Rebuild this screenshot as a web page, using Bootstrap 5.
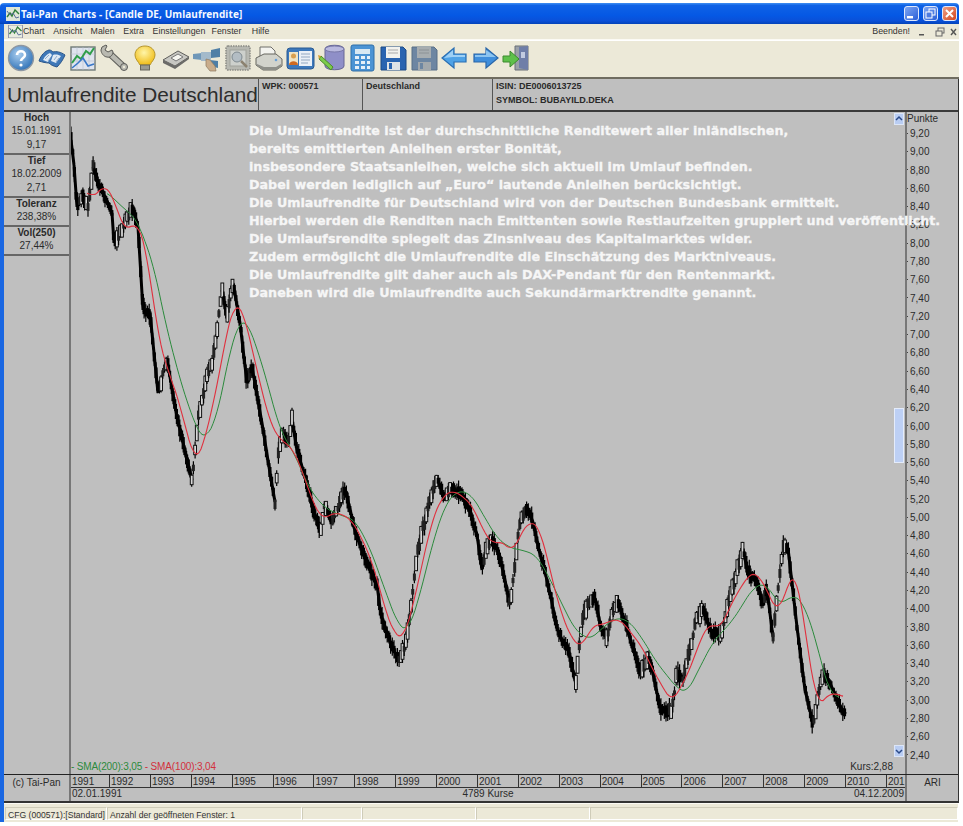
<!DOCTYPE html>
<html lang="de">
<head>
<meta charset="utf-8">
<title>Tai-Pan Charts</title>
<link href="https://cdn.jsdelivr.net/npm/bootstrap@5.3.0/dist/css/bootstrap.min.css" rel="stylesheet">
<style>
html,body{height:826px;overflow:hidden;background:#fff;}
body{font-family:"Liberation Sans",Arial,sans-serif;font-size:10px;color:#2b2b2b;line-height:1;}
.appwin{width:959px;height:822px;padding-top:3px;}
.titlebar{height:21px;background:linear-gradient(#3f8ff2 0,#0f62e6 12%,#0558e4 60%,#0a50d8 85%,#0343b8 100%);padding:0 2px 0 6px;border-radius:4px 4px 0 0;}
.titletext{font-family:"Noto Sans",sans-serif;font-weight:700;font-size:10px;color:#f4f8ff;margin-left:1px;white-space:pre;letter-spacing:.1px;}
.capbtn{width:15px;height:15px;border:1px solid #dfe8fb;border-radius:3px;background:linear-gradient(135deg,#7ea6f2,#2a5fd8);}
.capclose{background:linear-gradient(135deg,#f0a085,#d2451e);}
.shell{border-left:4px solid #1a67e2;flex:1;min-height:0;}
.menubar{height:16px;background:#ece9d8;padding:0 1px 0 4px;font-size:8.8px;color:#333;border-bottom:1px solid #fbfaf4;}
.m2{margin-left:8.8px;}.m1{margin-left:0;}.m3{margin-left:8.4px;}.m4{margin-left:8.8px;}.m5{margin-left:8.7px;}.m6{margin-left:6.2px;}.m7{margin-left:10.4px;}
.toolbar{height:39px;background:#ece9d8;padding:2px 0 0 2px;gap:1px;border-bottom:2px solid #6f6c60;border-top:1px solid #fff;}
.toolbar svg{width:30px;height:30px;display:block;}
.panel{background:#bfbfbf;flex:1;min-height:0;border-right:1px solid #333;}
.headrow{height:33px;border-bottom:2px solid #3a3a3a;}
.bigtitle{width:255px;font-size:20.8px;padding:6px 0 0 3px;color:#2d2d2d;white-space:nowrap;border-right:1px solid #555;}
.hcell{font-weight:700;font-size:9px;padding:3px 0 0 3px;color:#2a2a2a;border-right:1px solid #555;}
.hw1{width:104px;}.hw2{width:130px;}
.hcell div+div{margin-top:5px;}
.mainrow{flex:1;min-height:0;}
.sidecol{width:67px;border-right:2px solid #777;text-align:center;}
.statbox{border-bottom:2px solid #666;}
.statbox b{display:block;height:12px;line-height:11px;color:#2a2a2a;font-size:10px;}
.statbox span{display:block;height:14px;line-height:14px;}
.s3{height:43px;}.s2{height:29px;}
.chartzone{flex:1;min-width:0;}
.chartsvg{position:absolute;left:0;top:0;width:834px;height:662px;display:block;filter:blur(.35px);}
.infotext{position:absolute;left:178px;top:10px;font-family:"DejaVu Sans",sans-serif;font-weight:700;font-size:12.7px;line-height:18.05px;color:#f6f6f6;white-space:nowrap;z-index:3;-webkit-text-stroke:.3px #f6f6f6;}
.legendrow{position:relative;margin-top:auto;height:15px;line-height:15px;padding:0 12px 0 0;}
.smatext{letter-spacing:-.15px;}
.grn{color:#2c8a3c;}.rd{color:#d2303c;}
.axiscol{width:53px;border-left:2px solid #777;padding-top:2px;position:relative;}
.axistitle{padding-left:0;height:11px;}
.axisvals{flex:1;padding:4px 0 13px 0;}
.axisvals span{display:block;height:10px;line-height:10px;}
.axisvals span::before{content:"";display:inline-block;width:1px;height:1px;background:#444;margin:0 2px 2px 0;vertical-align:middle;}
.sbtn{position:absolute;right:1px;width:10px;height:12px;border:1px solid #dce6f8;background:#b9cdf3;z-index:4;}
.sthumb{position:absolute;right:1px;top:296px;width:10px;height:55px;background:#bdd0f5;border:1px solid #e4ecfb;z-index:4;}
.sup{top:1px;}.sdown{top:633px;}
.bottomrow{height:29px;border-top:1px solid #222;border-bottom:2px solid #333;}
.cpcol{width:67px;padding-top:3px;text-align:center;border-right:2px solid #777;}
.axcenter{flex:1;min-width:0;}
.yeargrid{display:grid;grid-template-columns:39px repeat(19,40.9px) 1fr;height:14px;border-bottom:1px solid #333;}
.yeargrid div{border-right:1px solid #333;padding:2px 0 0 1px;white-space:nowrap;}
.yeargrid div:last-child{border-right:0;}
.daterow{height:13px;padding:1px 1px 0 1px;}
.aricol{width:53px;border-left:2px solid #777;text-align:center;padding-top:3px;}
.statusbar{height:19px;background:#ece9d8;padding:3px 0 2px 1px;font-size:8.6px;border-top:1px solid #fbfaf4;margin-right:1px;color:#333;}
.spane{height:100%;border:1px solid #d3d0bf;border-color:#cfccb9 #fff #fff #cfccb9;padding:3px 2px 0 2px;white-space:nowrap;}
.p1{width:102px;}.p2{width:195px;}.p3{width:60px;}.p4{width:114px;}.p5{width:114px;}.p6{flex:1;}
</style>
</head>
<body>
<div class="appwin d-flex flex-column">
  <div class="titlebar d-flex align-items-center">
    <svg width="14" height="14" viewBox="0 0 14 14"><rect width="14" height="14" fill="#dfe6d8"/><path d="M1 10l3-4 2 3 3-6 4 4" fill="none" stroke="#2f7d3a" stroke-width="1.4"/><path d="M1 4l3 4 3-2 3 5 3-1" fill="none" stroke="#5a6f9a"/></svg>
    <span class="titletext">Tai-Pan  Charts - [Candle DE, Umlaufrendite]</span>
    <div class="ms-auto d-flex gap-1">
      <div class="capbtn d-flex align-items-end justify-content-start"><svg width="13" height="13" viewBox="0 0 13 13"><rect x="2" y="9" width="6" height="2.4" fill="#fff"/></svg></div>
      <div class="capbtn"><svg width="13" height="13" viewBox="0 0 13 13"><rect x="5" y="2" width="6" height="6" fill="none" stroke="#fff"/><rect x="2" y="5" width="6" height="6" fill="#4d7be0" stroke="#fff"/></svg></div>
      <div class="capbtn capclose"><svg width="13" height="13" viewBox="0 0 13 13"><path d="M3 3l7 7M10 3l-7 7" stroke="#fff" stroke-width="2"/></svg></div>
    </div>
  </div>
  <div class="shell d-flex flex-column">
    <div class="menubar d-flex align-items-center">
      <svg width="15" height="13" viewBox="0 0 14 13"><rect width="14" height="13" fill="#e8ecdf" stroke="#99a"/><path d="M1 9l3-4 2 3 3-6 4 4" fill="none" stroke="#2f7d3a" stroke-width="1.3"/><path d="M1 3l3 4 3-2 3 5 3-1" fill="none" stroke="#5a6f9a"/></svg>
      <span class="m1">Chart</span><span class="m2">Ansicht</span><span class="m3">Malen</span><span class="m4">Extra</span><span class="m5">Einstellungen</span><span class="m6">Fenster</span><span class="m7">Hilfe</span>
      <span class="ms-auto">Beenden!</span>
      <svg class="ms-2" width="40" height="12" viewBox="0 0 40 12"><rect x="1" y="8" width="5" height="1.5" fill="#555"/><rect x="20" y="2" width="6" height="5" fill="none" stroke="#666"/><rect x="18" y="5" width="6" height="5" fill="#ece9d8" stroke="#666"/><path d="M33 3l5 6M38 3l-5 6" stroke="#555" stroke-width="1.4"/></svg>
    </div>
    <div class="toolbar d-flex">
      <svg viewBox="0 0 30 30"><defs><radialGradient id="gb" cx=".4" cy=".35" r=".7"><stop offset="0" stop-color="#a9cdee"/><stop offset="1" stop-color="#2c6fb5"/></radialGradient></defs><circle cx="15" cy="15" r="12.5" fill="url(#gb)" stroke="#8d97a2" stroke-width="1.400"/><path d="M11 12c0-5 8-5 8 0 0 3-4 3-4 6" fill="none" stroke="#fff" stroke-width="2.6"/><circle cx="15" cy="22" r="1.6" fill="#fff"/></svg>
      <svg viewBox="0 0 30 30"><path d="M2 18c2-6 6-10 10-11 2 0 3 1 4 2 3-1 8 0 12 3-2 5-5 9-8 12-4-1-6-2-8-4-3 0-7-1-10-2z" fill="#3f78b8" stroke="#2a5488"/><path d="M6 17c2-4 4-6 7-7l2 2-4 7zM16 12c3-1 6 0 8 1l-5 7-5-2z" fill="#e0eaf4"/><path d="M8 16l4-4M11 18l3-4M17 17l3-4M19 19l3-4" stroke="#7b9bc2" stroke-width=".8"/></svg>
      <svg viewBox="0 0 30 30"><rect x="3" y="4" width="24" height="23" fill="#dfe4ee" stroke="#6f7a78" stroke-width="1.4"/><path d="M9 4v23M15 4v23M21 4v23M3 11h24M3 18h24" stroke="#b9bfd0" stroke-width=".6"/><path d="M4 20l5-7 4 3 5-8 4 3 4-6" fill="none" stroke="#2f9e4a" stroke-width="2"/><path d="M4 25l6-5 5-5 5 8 6-2" fill="none" stroke="#3a78c8" stroke-width="1.6"/></svg>
      <svg viewBox="0 0 30 30"><path d="M10 10l15 14" stroke="#5c5c58" stroke-width="6.500"/><path d="M10 10l15 14" stroke="#b9b9b1" stroke-width="4.500"/><path d="M3 4l4-2 1 1-2 4 3 2 4-2 1 2c0 3-3 6-6 5-3 0-6-4-6-7z" fill="#b9b9b1" stroke="#5c5c58"/><circle cx="25" cy="24" r="3.500" fill="#b9b9b1" stroke="#5c5c58"/><circle cx="25" cy="24" r="1.200" fill="#ece9d8"/></svg>
      <svg viewBox="0 0 30 30"><defs><radialGradient id="gy" cx=".45" cy=".35" r=".7"><stop offset="0" stop-color="#fff5a8"/><stop offset="1" stop-color="#efb80c"/></radialGradient></defs><path d="M15 3c6 0 10 4 10 9 0 4-3 6-5 10h-10c-2-4-5-6-5-10 0-5 4-9 10-9z" fill="url(#gy)" stroke="#b6962c"/><rect x="10.500" y="22" width="9" height="5" fill="#9a9a90" stroke="#66665c"/></svg>
      <svg viewBox="0 0 30 30"><path d="M2 17l15-9 11 6-14 9z" fill="#c7c7c2" stroke="#5f5f5c"/><path d="M2 17v3l12 6 14-10v-2L14 23z" fill="#6b6b68"/><path d="M10 15l7-4 5 3-7 4z" fill="#f5f5f0" stroke="#777"/></svg>
      <svg viewBox="0 0 30 30"><path d="M1 11l9-1v7l-9-1z" fill="#6f97b8"/><path d="M19 7l9-2v9l-9 1zM18 17l8 1v7l-8-2z" fill="#4f7fa6"/><path d="M9 9h10v9H9z" fill="#a3bacb"/><path d="M14 16l4 1 5 6 1 5-6 0-4-5z" fill="#c9ad8c" stroke="#8d7a60" stroke-width=".7"/></svg>
      <svg viewBox="0 0 30 30"><rect x="3" y="3" width="24" height="24" rx="2" fill="#b7b8b1" stroke="#8a8a84" stroke-width="1.500" stroke-dasharray="1.500 1"/><rect x="7" y="7" width="16" height="16" fill="#cdd0cc" stroke="#a0a29c"/><circle cx="14" cy="14" r="5" fill="#b3bdc4" stroke="#7f8a90"/><path d="M18 18l6 6" stroke="#8c8270" stroke-width="2.500"/></svg>
      <svg viewBox="0 0 30 30"><path d="M6 4h11l4 4v8H6z" fill="#f3f3ef" stroke="#6e6e6a"/><path d="M2 15l8-4h12l6 5v7l-6 4H9l-7-5z" fill="#d2d3cc" stroke="#66665f"/><path d="M3 21l7 3h12l5-3v3l-5 3H9l-6-4z" fill="#8e8f89"/><circle cx="22" cy="17" r="1.300" fill="#6aa0d8"/></svg>
      <svg viewBox="0 0 30 30"><rect x="2" y="5" width="27" height="21" rx="3" fill="#3c78bb" stroke="#2b5a92"/><rect x="14" y="8" width="13" height="15" fill="#eaf0f7"/><path d="M16 11h9M16 14h9M16 17h9M16 20h7" stroke="#93a8c2"/><rect x="4" y="9" width="9" height="13" fill="#f0e4c4"/><circle cx="8.500" cy="13" r="2.500" fill="#d9a050"/><path d="M4 22c0-5 9-5 9 0z" fill="#d06a20"/></svg>
      <svg viewBox="0 0 30 30"><path d="M9 6c0-5 19-5 19 0v17c0 5-19 5-19 0z" fill="#8f8fc8" stroke="#666694"/><ellipse cx="18.500" cy="6" rx="9.500" ry="3" fill="#b9b9df" stroke="#7878a8"/><path d="M5 13l12 11-2 3-12-11z" fill="#7ccc4a" stroke="#4c8a2a"/><path d="M3 16l2-3-3-1z" fill="#d8a030"/></svg>
      <svg viewBox="0 0 30 30"><rect x="4" y="2" width="23" height="26" rx="2" fill="#4c94d4" stroke="#2f6ea8"/><rect x="8" y="6" width="15" height="5" fill="#d8e8f2"/><g fill="#e6f0f8"><rect x="8" y="13" width="4" height="3"/><rect x="14" y="13" width="4" height="3"/><rect x="20" y="13" width="3" height="3"/><rect x="8" y="18" width="4" height="3"/><rect x="14" y="18" width="4" height="3"/><rect x="20" y="18" width="3" height="3"/><rect x="8" y="23" width="4" height="3"/><rect x="14" y="23" width="4" height="3"/><rect x="20" y="23" width="3" height="3"/></g></svg>
      <svg viewBox="0 0 30 30"><path d="M3 4h22l3 3v20H3z" fill="#2a64b0" stroke="#1c4a86"/><rect x="8" y="4" width="14" height="11" fill="#f2f2ee"/><path d="M10 7h10M10 10h10" stroke="#aaa"/><rect x="9" y="19" width="13" height="8" fill="#dfe3e6"/><rect x="11" y="20" width="3" height="6" fill="#2a64b0"/></svg>
      <svg viewBox="0 0 30 30"><path d="M3 4h22l3 3v20H3z" fill="#6d86a2" stroke="#596e86"/><rect x="8" y="4" width="14" height="11" fill="#a7adb0"/><path d="M10 7h10M10 10h10" stroke="#8c9296"/><rect x="9" y="19" width="13" height="8" fill="#a2a8ac"/><rect x="11" y="20" width="3" height="6" fill="#6d86a2"/></svg>
      <svg viewBox="0 0 30 30"><path d="M2 15L14 5v6h12v8H14v6z" fill="#4ea2e6" stroke="#2a6eb2" stroke-width="1.2"/><path d="M4 15l9-8v5h12v2H13z" fill="#9ed0f5"/></svg>
      <svg viewBox="0 0 30 30"><path d="M27 15L15 5v6H3v8h12v6z" fill="#3f8edc" stroke="#2a66a8" stroke-width="1.2"/><path d="M25 14l-10-7v5H4v2h11z" fill="#8cc4f0"/></svg>
      <svg viewBox="0 0 30 30"><path d="M13 3h13v24H13z" fill="#9aa0a8" stroke="#686e76"/><path d="M17 4l9-1v24l-9-2z" fill="#6f7ea8"/><rect x="19" y="9" width="4" height="6" fill="#c2cbe0"/><path d="M1 13h7V8l9 8-9 8v-5H1z" fill="#5ec04a" stroke="#3c8a2e"/></svg>
    </div>
    <div class="panel d-flex flex-column">
      <div class="headrow d-flex">
        <div class="bigtitle">Umlaufrendite Deutschland</div>
        <div class="hcell hw1">WPK: 000571</div>
        <div class="hcell hw2">Deutschland</div>
        <div class="hcell flex-grow-1 border-0"><div>ISIN: DE0006013725</div><div>SYMBOL: BUBAYILD.DEKA</div></div>
      </div>
      <div class="mainrow d-flex">
        <div class="sidecol">
          <div class="statbox s3"><b>Hoch</b><span>15.01.1991</span><span>9,17</span></div>
          <div class="statbox s3"><b>Tief</b><span>18.02.2009</span><span>2,71</span></div>
          <div class="statbox s2"><b>Toleranz</b><span>238,38%</span></div>
          <div class="statbox s2"><b>Vol(250)</b><span>27,44%</span></div>
        </div>
        <div class="chartzone position-relative d-flex flex-column">
          <svg class="chartsvg" id="chart" viewBox="71 112 834 662" preserveAspectRatio="none"></svg>
          <div class="infotext">Die Umlaufrendite ist der durchschnittliche Renditewert aller inländischen,<br>bereits emittierten Anleihen erster Bonität,<br>insbesondere Staatsanleihen, welche sich aktuell im Umlauf befinden.<br>Dabei werden lediglich auf „Euro“ lautende Anleihen berücksichtigt.<br>Die Umlaufrendite für Deutschland wird von der Deutschen Bundesbank ermittelt.<br>Hierbei werden die Renditen nach Emittenten sowie Restlaufzeiten gruppiert und veröffentlicht.<br>Die Umlaufsrendite spiegelt das Zinsniveau des Kapitalmarktes wider.<br>Zudem ermöglicht die Umlaufrendite die Einschätzung des Marktniveaus.<br>Die Umlaufrendite gilt daher auch als DAX-Pendant für den Rentenmarkt.<br>Daneben wird die Umlaufrendite auch Sekundärmarktrendite genannt.</div>
          <div class="sbtn sup"><svg width="8" height="10" viewBox="0 0 8 10"><path d="M1 6l3-3 3 3" fill="none" stroke="#2a4a8a" stroke-width="1.500"/></svg></div>
          <div class="sthumb"></div>
          <div class="sbtn sdown"><svg width="8" height="10" viewBox="0 0 8 10"><path d="M1 4l3 3 3-3" fill="none" stroke="#2a4a8a" stroke-width="1.500"/></svg></div>
          <div class="legendrow d-flex justify-content-between"><span class="smatext"><span class="grn">- SMA(200):3,05</span> <span class="rd">- SMA(100):3,04</span></span><span>Kurs:2,88</span></div>
        </div>
        <div class="axiscol d-flex flex-column">
          <div class="axistitle">Punkte</div>
          <div class="axisvals d-flex flex-column justify-content-between" id="axis"></div>
        </div>
      </div>
      <div class="bottomrow d-flex">
        <div class="cpcol">(c) Tai-Pan</div>
        <div class="axcenter d-flex flex-column">
          <div class="yeargrid"><div>1991</div><div>1992</div><div>1993</div><div>1994</div><div>1995</div><div>1996</div><div>1997</div><div>1998</div><div>1999</div><div>2000</div><div>2001</div><div>2002</div><div>2003</div><div>2004</div><div>2005</div><div>2006</div><div>2007</div><div>2008</div><div>2009</div><div>2010</div><div>201</div></div>
          <div class="daterow d-flex justify-content-between"><span>02.01.1991</span><span>4789 Kurse</span><span>04.12.2009</span></div>
        </div>
        <div class="aricol">ARI</div>
      </div>
    </div>
    <div class="statusbar d-flex">
      <div class="spane p1">CFG (000571):[Standard]</div>
      <div class="spane p2">Anzahl der geöffneten Fenster: 1</div>
      <div class="spane p3"></div>
      <div class="spane p4"></div>
      <div class="spane p5"></div>
      <div class="spane p6"></div>
    </div>
  </div>
</div>
<script>
var ax=document.getElementById('axis');
for(var v=920;v>=240;v-=20){var s=document.createElement('span');s.textContent=(v/100).toFixed(2).replace('.',',');ax.appendChild(s);}
var P=[[71,140],[74,165],[77,207],[83,197],[88,205],[93,167],[98,183],[105,197],[112,213],[114,243],[120,233],[133,207],[138,227],[143,310],[150,313],[158,393],[167,360],[177,417],[192,480],[198,420],[207,377],[213,360],[222,290],[227,317],[233,283],[240,323],[247,383],[252,367],[262,423],[270,473],[275,502],[279,445],[284,432],[288,445],[292,420],[297,450],[303,470],[309,492],[315,515],[321,530],[325,503],[331,522],[337,512],[345,488],[349,505],[356,535],[363,552],[370,570],[377,585],[381,615],[387,632],[393,650],[399,658],[405,645],[409,620],[413,590],[417,555],[421,535],[426,518],[433,488],[438,480],[444,498],[450,490],[456,492],[463,497],[470,512],[477,535],[482,570],[487,545],[492,538],[498,552],[504,575],[510,605],[515,565],[520,520],[527,507],[533,522],[539,550],[545,572],[551,598],[557,628],[563,642],[569,652],[576,685],[579,650],[583,615],[589,602],[595,598],[601,628],[607,638],[613,608],[619,605],[625,622],[631,642],[640,670],[650,660],[660,707],[672,712],[677,670],[683,680],[697,617],[703,610],[712,633],[722,633],[728,603],[743,550],[748,573],[757,580],[762,603],[767,590],[773,637],[783,547],[788,548],[797,627],[805,690],[813,723],[823,673],[830,683],[843,712],[846,714]];
var R=[[87,190],[90,200],[105,185],[112,193],[120,220],[127,232],[137,220],[147,253],[157,330],[167,370],[173,382],[183,417],[195,463],[203,447],[217,387],[227,330],[235,302],[243,310],[260,383],[270,423],[280,440],[292,447],[302,470],[312,500],[322,520],[335,512],[350,518],[362,538],[375,570],[385,610],[395,635],[403,640],[412,610],[422,565],[432,520],[442,497],[452,490],[464,497],[474,508],[484,533],[494,545],[504,540],[512,555],[520,535],[530,520],[540,528],[550,570],[560,610],[572,640],[582,648],[592,625],[602,625],[612,620],[622,620],[632,635],[640,643],[653,670],[672,703],[690,670],[700,640],[710,622],[720,630],[733,600],[750,573],[757,573],[767,590],[778,615],[786,590],[793,573],[797,575],[805,630],[817,707],[825,698],[833,692],[843,697]];
var G=[[107,192],[117,202],[137,220],[153,263],[167,330],[183,390],[198,432],[205,440],[217,417],[230,350],[240,320],[247,321],[260,357],[270,393],[280,430],[295,455],[310,490],[325,508],[340,515],[355,520],[370,548],[385,590],[398,625],[408,632],[420,595],[432,545],[445,505],[458,490],[472,495],[485,518],[497,538],[510,548],[522,550],[536,555],[548,575],[560,600],[575,630],[590,640],[600,630],[615,618],[628,620],[640,635],[657,663],[677,688],[687,693],[700,667],[713,642],[733,620],[753,588],[765,583],[780,605],[793,595],[803,602],[817,643],[822,667],[830,693],[840,698]];
function at(A,x){for(var i=1;i<A.length;i++){if(x<=A[i][0]){var a=A[i-1],b=A[i];return a[1]+(b[1]-a[1])*(x-a[0])/(b[0]-a[0]);}}return A[A.length-1][1];}
function pts(A){var s='';for(var x=A[0][0];x<=A[A.length-1][0];x+=2){var y=0,n=0;for(var k=-6;k<=6;k+=2){y+=at(A,Math.min(Math.max(x+k,A[0][0]),A[A.length-1][0]));n++;}s+=x+','+(y/n).toFixed(1)+' ';}return s;}
var seed=12345;function rnd(){seed=(seed*16807)%2147483647;return seed/2147483647;}
var h='';
var fall='';
for(var i=1;i<P.length;i++){if(P[i][1]>P[i-1][1]){fall+='M'+P[i-1][0]+' '+P[i-1][1]+'L'+P[i][0]+' '+P[i][1];}}
h+='<path d="'+fall+'" fill="none" stroke="#000" stroke-width="3"/>';
for(var x=71;x<=846;x+=1.7){
 var y=at(P,x)+(rnd()-.5)*5;
 var d=at(P,x+3)-at(P,x-3);
 var bh=5+rnd()*8;
 var wick=1+rnd()*5;
 h+='<path d="M'+x.toFixed(1)+' '+(y-bh/2-wick).toFixed(1)+'V'+(y+bh/2+wick).toFixed(1)+'" stroke="#000" stroke-width="1.2"/>';
 if(d>=-0.6){h+='<rect x="'+(x-1.6).toFixed(1)+'" y="'+(y-bh/2).toFixed(1)+'" width="3.2" height="'+bh.toFixed(1)+'" fill="#000"/>';}
 else if(x%5<2.6){h+='<rect x="'+(x-1.4).toFixed(1)+'" y="'+(y-bh/2-2).toFixed(1)+'" width="2.8" height="'+(bh+4).toFixed(1)+'" fill="#d8d8d8" stroke="#111" stroke-width="1"/>';}
 else{h+='<rect x="'+(x-1.5).toFixed(1)+'" y="'+(y-bh/2).toFixed(1)+'" width="3" height="'+bh.toFixed(1)+'" fill="#222"/>';}
}
h+='<polyline points="'+pts(G)+'" fill="none" stroke="#2b8a3c" stroke-width="1"/>';
h+='<polyline points="'+pts(R)+'" fill="none" stroke="#e0303e" stroke-width="1.1"/>';
document.getElementById('chart').innerHTML=h;
</script>
<script src="https://cdn.jsdelivr.net/npm/bootstrap@5.3.0/dist/js/bootstrap.bundle.min.js"></script>
</body>
</html>
